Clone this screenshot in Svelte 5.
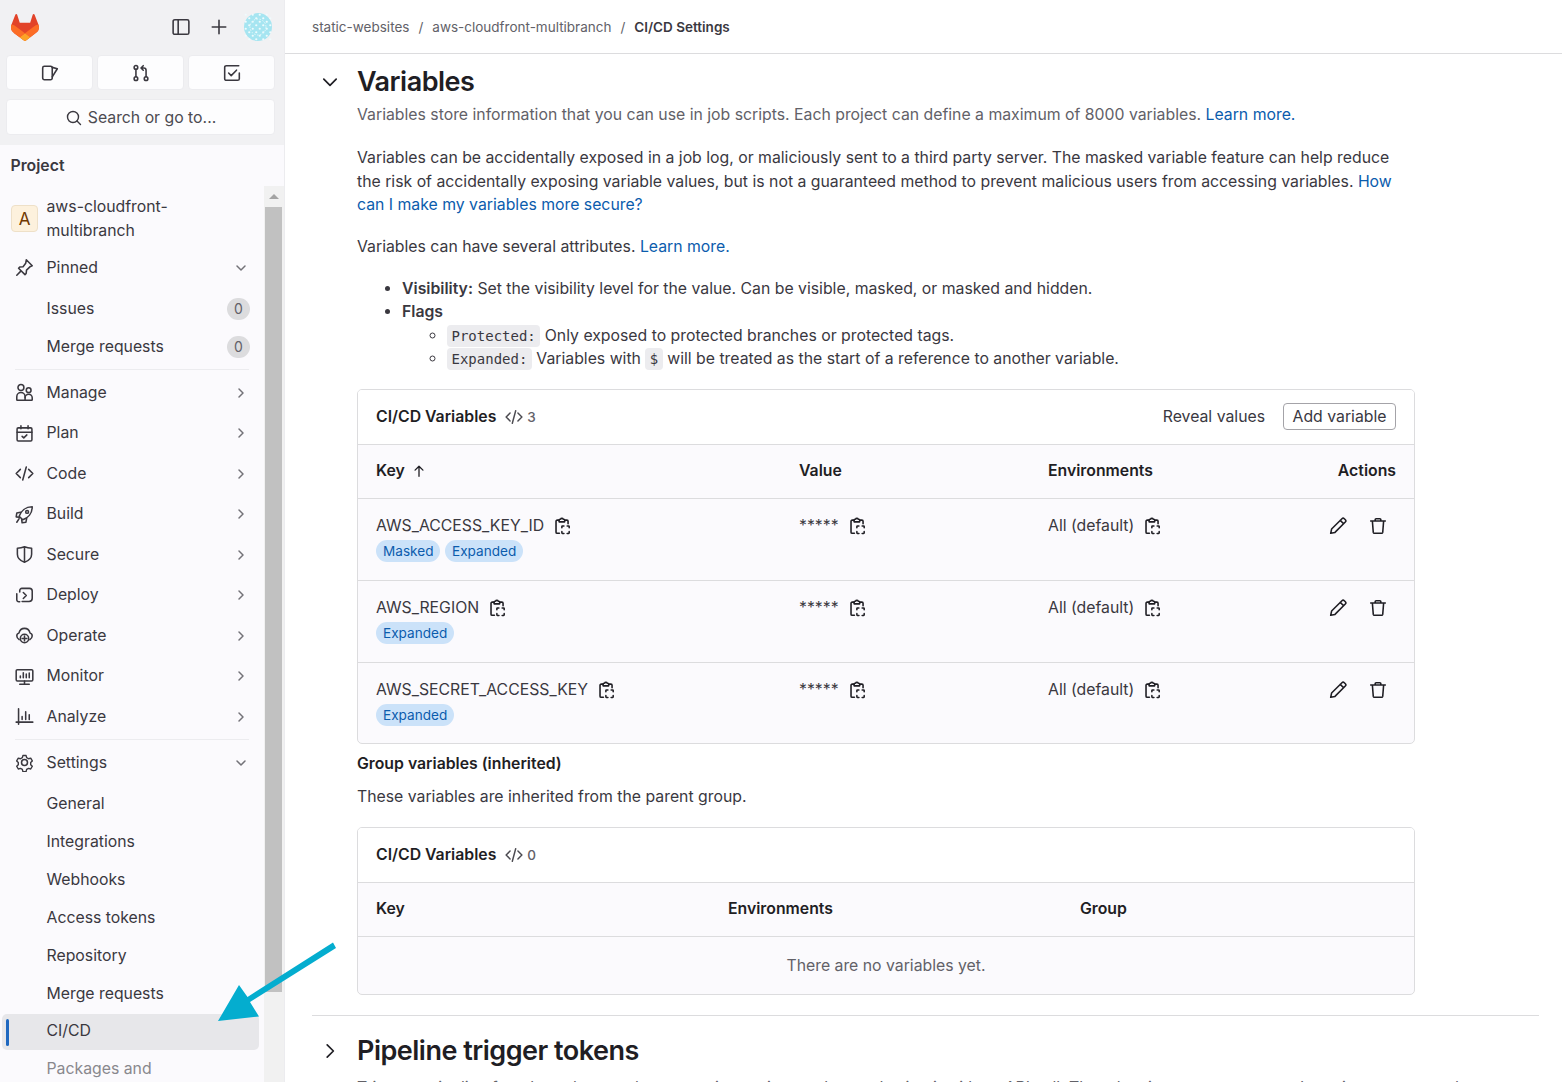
<script>
  const main = [
    { key: 'manage', label: 'Manage' }, { key: 'plan', label: 'Plan' }, { key: 'code', label: 'Code' },
    { key: 'build', label: 'Build' }, { key: 'secure', label: 'Secure' }, { key: 'deploy', label: 'Deploy' },
    { key: 'operate', label: 'Operate' }, { key: 'monitor', label: 'Monitor' }, { key: 'analyze', label: 'Analyze' }
  ];
  const subs = ['General', 'Integrations', 'Webhooks', 'Access tokens', 'Repository', 'Merge requests'];
  const vars = [
    { name: 'AWS_ACCESS_KEY_ID', tags: ['Masked', 'Expanded'] },
    { name: 'AWS_REGION', tags: ['Expanded'] },
    { name: 'AWS_SECRET_ACCESS_KEY', tags: ['Expanded'] }
  ];
  const dots = [];
  for (let r = 0; r < 8; r++) for (let c = 0; c < 8; c++) {
    const x = 1.75 + c * 3.5, y = 1.75 + r * 3.5;
    if ((r + c) % 2 === 0) dots.push({ x, y });
  }
</script>

{#snippet icon(k)}
  <svg class="ic" viewBox="0 0 16 16" fill="none" stroke="currentColor" stroke-width="1.300" stroke-linecap="round" stroke-linejoin="round">
    {#if k === 'manage'}
      <circle cx="5" cy="3.800" r="2.500" /><path d="M1.500 11.500a3.500 3.500 0 0 1 7 0V14a.5.5 0 0 1-.5.5H2a.5.5 0 0 1-.5-.5Z" /><circle cx="11.500" cy="6" r="2" /><path d="M8.500 14.500h5.500a.5.5 0 0 0 .5-.5v-1.500a3 3 0 0 0-3-3 3 3 0 0 0-3 3" />
    {:else if k === 'plan'}
      <rect x="1.750" y="3.250" width="12.500" height="11" rx="1" /><path d="M1.750 7h12.500M5 1.500v2.500M11 1.500v2.500M6 10.400l1.400 1.300L10 9.200" />
    {:else if k === 'code'}
      <path d="M4.500 4.500 1 8l3.500 3.500M11.500 4.500 15 8l-3.500 3.500M9.500 2.500l-3 11" />
    {:else if k === 'build'}
      <path d="M5 11 3.500 9.500C5 5 9 1.500 14.500 1.500 14.500 7 11 11 6.500 12.500Z" /><circle cx="10.200" cy="5.800" r="1.200" /><path d="M4.600 6.200 1.500 6.800 1 10l2.600.4M9.800 11.400l-.6 3.100L6 15l-.4-2.600M3.500 11.500 1.500 14.500" />
    {:else if k === 'secure'}
      <path d="M8 1.500c2 .9 4 1.200 6 1.200v5c0 3.300-2.500 5.500-6 6.800-3.500-1.300-6-3.500-6-6.800v-5c2 0 4-.3 6-1.200ZM8 1.500v13" />
    {:else if k === 'deploy'}
      <path d="M4 5V3.800A1.800 1.800 0 0 1 5.800 2h6.400A2.300 2.300 0 0 1 14.500 4.300v6A2.700 2.700 0 0 1 11.800 13H6M1.500 6.500v5A1.700 1.700 0 0 0 3.200 13.200H4M7 5.500 9.500 8 7 10.500" />
    {:else if k === 'operate'}
      <path d="M3.500 11.500C1 10 .8 6.700 3.300 6 4 3.300 6 2 8 2s4 1.300 4.700 4c2.500.7 2.300 4 -.2 5.500" /><circle cx="8" cy="10.500" r="3.500" /><path d="M8 8.500v4M6 10.500h4" />
    {:else if k === 'monitor'}
      <rect x="1" y="2.250" width="14" height="9.500" rx="1" /><path d="M4 14.500h8M8 11.750v2.750M4.500 9V7.500M7 9V4.800M9.500 9V6M12 9V5" />
    {:else if k === 'analyze'}
      <path d="M3 1.500v13M1 12.750h14M6 10.500V8M9 10.500V4M12 10.500V6.500" />
    {:else if k === 'settings'}
      <path d="M6.500 1.500h3l.5 2 1.800 1 2-.6 1.500 2.600-1.500 1.500v2l1.500 1.500-1.500 2.600-2-.6-1.800 1-.5 2h-3l-.5-2-1.800-1-2 .6L.7 11.500l1.500-1.500V8L.7 6.500l1.500-2.600 2 .6 1.800-1Z" transform="translate(.8 .8) scale(.9)" /><circle cx="8" cy="8" r="2.500" />
    {:else if k === 'pin'}
      <path d="M9.500 1.500l5 5-1.500.6-3.300 3.100-.3 2.800-1 1-5.400-5.400 1-1 2.800-.3L9 4.500ZM4.500 11.500l-3 3" />
    {/if}
  </svg>
{/snippet}

{#snippet chevR()}
  <svg class="chev" viewBox="0 0 16 16" fill="none" stroke="currentColor" stroke-width="1.500" stroke-linecap="round" stroke-linejoin="round"><path d="M6 4l4 4-4 4" /></svg>
{/snippet}
{#snippet chevD()}
  <svg class="chev" viewBox="0 0 16 16" fill="none" stroke="currentColor" stroke-width="1.500" stroke-linecap="round" stroke-linejoin="round"><path d="M4 6l4 4 4-4" /></svg>
{/snippet}
{#snippet clip()}
  <svg class="clip" viewBox="0 0 16 16" fill="none" stroke="currentColor" stroke-width="1.400" stroke-linecap="round" stroke-linejoin="round">
    <path d="M4.500 2.800H2.800a1 1 0 0 0-1 1v9.700a1 1 0 0 0 1 1h2" />
    <path d="M10 2.800h1.500a1 1 0 0 1 1 1V6" />
    <path d="M4.500 4.300V2.800a.8.8 0 0 1 .8-.8h.5a1.300 1.300 0 0 1 2.400 0h.5a.8.8 0 0 1 .8.800v1.500Z" />
    <path d="M7 9.600V8.500a.5.5 0 0 1 .5-.5h1.300M11.700 8H13a.5.5 0 0 1 .5.500v1.100M13.500 13v1.100a.5.5 0 0 1-.5.500h-1.300M8.800 14.600H7.500a.5.5 0 0 1-.5-.5V13" />
  </svg>
{/snippet}
{#snippet codeTag()}
  <svg class="codeTag" viewBox="0 0 16 16" fill="none" stroke="currentColor" stroke-width="1.300" stroke-linecap="round" stroke-linejoin="round"><path d="M4.500 4.500 1 8l3.500 3.500M11.500 4.500 15 8l-3.500 3.500M9.500 2.500l-3 11" /></svg>
{/snippet}

<div class="page">
  <aside class="sidebar">
    <div class="top">
      <div class="toprow">
        <svg class="logo" viewBox="0 0 25 24">
          <path d="m24.507 9.5-.034-.09L21.082.562a.896.896 0 0 0-1.694.091l-2.29 7.01H7.825L5.535.653a.898.898 0 0 0-1.694-.09L.451 9.411.416 9.5a6.297 6.297 0 0 0 2.09 7.278l.012.01.03.022 5.16 3.867 2.56 1.935 1.554 1.176a1.051 1.051 0 0 0 1.268 0l1.555-1.176 2.56-1.935 5.197-3.89.014-.01A6.297 6.297 0 0 0 24.507 9.5Z" fill="#E24329" />
          <path d="m24.507 9.5-.034-.09a11.44 11.44 0 0 0-4.56 2.051l-7.447 5.632 4.742 3.584 5.197-3.89.014-.01A6.297 6.297 0 0 0 24.507 9.5Z" fill="#FC6D26" />
          <path d="m7.707 20.677 2.56 1.935 1.555 1.176a1.051 1.051 0 0 0 1.268 0l1.555-1.176 2.56-1.935-4.743-3.584-4.755 3.584Z" fill="#FCA326" />
          <path d="M5.01 11.461a11.43 11.43 0 0 0-4.56-2.05L.416 9.5a6.297 6.297 0 0 0 2.09 7.278l.012.01.03.022 5.16 3.867 4.745-3.584-7.444-5.632Z" fill="#FC6D26" />
        </svg>
        <svg class="topic panel" viewBox="0 0 16 16" fill="none" stroke="currentColor" stroke-width="1.400"><rect x="1" y="1.500" width="14" height="13" rx="1.500" /><path d="M5.500 1.500v13" /></svg>
        <svg class="topic plus" viewBox="0 0 16 16" fill="none" stroke="currentColor" stroke-width="1.400" stroke-linecap="round"><path d="M8 2v12M2 8h12" /></svg>
        <svg class="avatar" viewBox="0 0 28 28">
          <circle cx="14" cy="14" r="14" fill="#a6e5f1" />
          {#each dots as d}<circle cx={d.x} cy={d.y} r="1.100" fill="#effbfd" />{/each}
          <circle cx="14" cy="14" r="8" fill="none" stroke="#e4f8fb" stroke-width="1" stroke-dasharray="1.500 1.500" />
        </svg>
      </div>
      <div class="btns">
        <div class="tb">
          <svg class="topic" viewBox="0 0 16 16" fill="none" stroke="currentColor" stroke-width="1.400" stroke-linejoin="round" stroke-linecap="round"><path d="M1.500 3.500A1.500 1.500 0 0 1 3 2h5.500A1.500 1.500 0 0 1 10 3.500v9A1.500 1.500 0 0 1 8.500 14H3a1.500 1.500 0 0 1-1.500-1.500Z" /><path d="M10 3l4.500 1.200L10 11.500" /></svg>
        </div>
        <div class="tb">
          <svg class="topic" viewBox="0 0 16 16" fill="none" stroke="currentColor" stroke-width="1.400" stroke-linecap="round" stroke-linejoin="round"><circle cx="3.500" cy="3" r="1.600" /><circle cx="3.500" cy="13" r="1.600" /><circle cx="12.500" cy="13" r="1.600" /><path d="M3.500 4.600v6.800M12.500 11.400V5.500A2 2 0 0 0 10.500 3.500H8.500M10 1.500 8 3.500l2 2" /></svg>
        </div>
        <div class="tb">
          <svg class="topic" viewBox="0 0 16 16" fill="none" stroke="currentColor" stroke-width="1.400" stroke-linecap="round" stroke-linejoin="round"><path d="M14.500 8v5A1.500 1.500 0 0 1 13 14.500H3A1.500 1.500 0 0 1 1.500 13V3A1.500 1.500 0 0 1 3 1.500h11M5 8l2.300 2.300L12 5.500" /></svg>
        </div>
      </div>
      <div class="search">
        <svg class="searchic" viewBox="0 0 16 16" fill="none" stroke="currentColor" stroke-width="1.400" stroke-linecap="round"><circle cx="7" cy="7" r="5.500" /><path d="M11 11l3.500 3.500" /></svg>
        Search or go to...
      </div>
    </div>
    <div class="context">Project</div>
    <div class="navwrap">
      <nav class="nav">
        <div class="project"><span class="pa">A</span><span class="pn">aws-cloudfront-<br />multibranch</span></div>
        <div class="row pinned">{@render icon('pin')}<span class="grow">Pinned</span>{@render chevD()}</div>
        <div class="sub gap"><span class="grow">Issues</span><span class="count">0</span></div>
        <div class="sub"><span class="grow">Merge requests</span><span class="count">0</span></div>
        <hr class="h1" />
        {#each main as m}
          <div class="row">{@render icon(m.key)}<span class="grow">{m.label}</span>{@render chevR()}</div>
        {/each}
        <hr class="h2" />
        <div class="row">{@render icon('settings')}<span class="grow">Settings</span>{@render chevD()}</div>
        {#each subs as s, i}
          <div class="sub" class:gap={i === 0}><span class="grow">{s}</span></div>
        {/each}
        <div class="sub active"><span class="grow">CI/CD</span></div>
        <div class="sub faded"><span class="grow">Packages and</span></div>
      </nav>
      <div class="scroll">
        <div class="up"></div>
        <div class="thumb"></div>
      </div>
    </div>
  </aside>

  <main class="content">
    <header class="crumbs">
      <span>static-websites</span><i>/</i><span>aws-cloudfront-multibranch</span><i>/</i><b>CI/CD Settings</b>
    </header>
    <div class="body">
      <div class="sec-head">
        <svg class="secchev" viewBox="0 0 16 16" fill="none" stroke="currentColor" stroke-width="1.500" stroke-linecap="round" stroke-linejoin="round"><path d="M2.500 5.500 8 11l5.500-5.500" /></svg>
        <h2>Variables</h2>
      </div>
      <div class="col">
        <p class="lead">Variables store information that you can use in job scripts. Each project can define a maximum of 8000 variables. <a href="#a">Learn more.</a></p>
        <p class="p1">Variables can be accidentally exposed in a job log, or maliciously sent to a third party server. The masked variable feature can help reduce the risk of accidentally exposing variable values, but is not a guaranteed method to prevent malicious users from accessing variables. <a href="#a">How can I make my variables more secure?</a></p>
        <p class="p2">Variables can have several attributes. <a href="#a">Learn more.</a></p>
        <ul>
          <li><b>Visibility:</b> Set the visibility level for the value. Can be visible, masked, or masked and hidden.</li>
          <li><b>Flags</b>
            <ul>
              <li><code>Protected:</code> Only exposed to protected branches or protected tags.</li>
              <li><code>Expanded:</code> Variables with <code>$</code> will be treated as the start of a reference to another variable.</li>
            </ul>
          </li>
        </ul>

        <section class="card">
          <div class="card-head">
            <b>CI/CD Variables</b>{@render codeTag()}<span class="num">3</span>
            <span class="grow"></span>
            <span class="reveal">Reveal values</span><span class="add">Add variable</span>
          </div>
          <div class="grid four th">
            <b class="keyhead">Key <svg class="sort" viewBox="0 0 16 16" fill="none" stroke="currentColor" stroke-width="1.500" stroke-linecap="round" stroke-linejoin="round"><path d="M8 14V2.500M3.500 7 8 2.500 12.500 7" /></svg></b>
            <b>Value</b><b>Environments</b><b class="right">Actions</b>
          </div>
          {#each vars as v}
            <div class="grid four tr">
              <div>
                <div class="cell">{v.name}{@render clip()}</div>
                <div class="tags">{#each v.tags as t}<span class="tag">{t}</span>{/each}</div>
              </div>
              <div class="cell stars">*****{@render clip()}</div>
              <div class="cell">All (default){@render clip()}</div>
              <div class="acts">
                <svg class="act" viewBox="0 0 16 16" fill="none" stroke="currentColor" stroke-width="1.400" stroke-linecap="round" stroke-linejoin="round"><path d="M1.500 14.500l.8-3.800L11.500 1.500a1.500 1.500 0 0 1 2.100 0l.9.9a1.500 1.500 0 0 1 0 2.100L5.300 13.700ZM10 3l3 3" /></svg>
                <svg class="act" viewBox="0 0 16 16" fill="none" stroke="currentColor" stroke-width="1.400" stroke-linecap="round" stroke-linejoin="round"><path d="M1.500 3.500h13M5.500 3.500V2.300a.8.8 0 0 1 .8-.8h3.400a.8.8 0 0 1 .8.8v1.200M3 3.500l.8 10.200a1 1 0 0 0 1 .8h6.400a1 1 0 0 0 1-.8L13 3.500" /></svg>
              </div>
            </div>
          {/each}
        </section>

        <h3 class="group">Group variables (inherited)</h3>
        <p class="groupp">These variables are inherited from the parent group.</p>

        <section class="card card2">
          <div class="card-head">
            <b>CI/CD Variables</b>{@render codeTag()}<span class="num">0</span>
          </div>
          <div class="grid three th"><b>Key</b><b>Environments</b><b>Group</b></div>
          <div class="empty">There are no variables yet.</div>
        </section>
      </div>
      <hr class="secline" />
      <div class="sec-head two">
        <svg class="secchev" viewBox="0 0 16 16" fill="none" stroke="currentColor" stroke-width="1.500" stroke-linecap="round" stroke-linejoin="round"><path d="M5.500 2.500 11 8l-5.500 5.500" /></svg>
        <h2>Pipeline trigger tokens</h2>
      </div>
      <p class="cut">Trigger a pipeline for a branch or tag by generating a trigger token and using it with an API call. The token impersonates a user's project access and</p>
    </div>
  </main>

  <svg class="arrow" viewBox="0 0 1562 1082" aria-hidden="true">
    <path d="M333 942.500 336 948 250 1002 259 1016.500 218 1021 239 985 247.500 997Z" fill="#04adcf" />
  </svg>
</div>

<style>
  :global(body) { margin: 0; background: #fff; }
  .page {
    position: relative; display: flex; width: 1562px; height: 1082px; overflow: hidden;
    font-family: Inter, "Noto Sans", sans-serif; font-size: 15.800px; color: #3a383f; line-height: 24px;
  }
  .sidebar { width: 284px; flex: none; background: #fbfafd; border-right: 1px solid #ececef; display: flex; flex-direction: column; }
  .top { background: #f1f1f3; height: 145px; padding: 0 9px 0 6px; box-sizing: border-box; flex: none; }
  .toprow { display: flex; align-items: center; height: 54px; margin-bottom: 1px; padding-left: 5px; }
  .logo { width: 28px; height: 27px; margin-right: auto; }
  .topic { width: 18px; height: 18px; color: #3a383f; display: block; }
  .panel { margin-right: 20px; }
  .plus { margin-right: 16px; }
  .avatar { width: 28px; height: 28px; margin-right: 3px; }
  .btns { display: flex; gap: 4px; }
  .tb { flex: 1; height: 35px; background: #fdfdfe; border: 1px solid #ececef; border-radius: 4px; display: flex; align-items: center; justify-content: center; box-sizing: border-box; }
  .search { margin-top: 9px; height: 36px; background: #fdfdfe; border: 1px solid #ececef; border-radius: 4px; box-sizing: border-box; display: flex; align-items: center; justify-content: center; gap: 6px; color: #4c4b51; padding: 1px 0 0 1px; }
  .searchic { width: 16px; height: 16px; color: #3a383f; }
  .context { height: 41px; flex: none; font-weight: 600; padding-left: 10.500px; line-height: 41px; color: #3a383f; }
  .navwrap { display: flex; flex: 1; min-height: 0; }
  .nav { width: 264px; flex: none; box-sizing: border-box; padding: 7px 5px 0 3px; }
  .project { display: flex; align-items: center; height: 51px; padding-left: 8px; gap: 8.500px; margin-bottom: 3.250px; }
  .pa { width: 27px; height: 27px; box-sizing: border-box; background: #fdf1dd; border: 1px solid #eee0c8; border-radius: 4px; color: #703800; display: flex; align-items: center; justify-content: center; font-size: 17px; }
  .row, .sub { display: flex; align-items: center; position: relative; box-sizing: border-box; }
  .row { height: 40.500px; padding: 0 9px 0 12px; }
  .sub { height: 38.100px; padding: 0 9px 0 43.500px; }
  .sub.gap { margin-top: 1.800px; }
  .ic { width: 19px; height: 19px; flex: none; margin-right: 12.500px; color: #3a383f; }
  .grow { flex: 1; }
  .chev { width: 16px; height: 16px; color: #737278; margin-left: auto; margin-right: 1px; }
  .count { width: 23px; height: 22px; border-radius: 11px; background: #dcdcde; color: #626168; font-size: 14px; display: flex; align-items: center; justify-content: center; }
  .nav hr { border: 0; border-top: 1px solid #ececef; margin: 0 10px 0 12px; }
  .nav hr.h1 { margin-top: 3.700px; margin-bottom: 2px; }
  .nav hr.h2 { margin-top: 2.500px; margin-bottom: 2px; }
  .active { background: #e7e7ea; border-radius: 5px; height: 36px; margin: 1px 0 -0.500px -1px; padding: 0 9px 2px 44.500px; }
  .active::before { content: ''; position: absolute; left: 4px; top: 5px; width: 3px; height: 27px; border-radius: 2px; background: #1f68c0; }
  .faded { color: #89888d; }
  .scroll { width: 20px; flex: none; background: #f1f1f1; box-sizing: border-box; padding: 0 2px 0 1px; }
  .up { height: 21px; position: relative; }
  .up::after { content: ''; position: absolute; left: 4px; top: 8px; border: 5px solid transparent; border-top: 0; border-bottom-color: #a3a3a3; }
  .thumb { height: 785px; background: #c1c1c1; }

  .content { flex: 1; min-width: 0; display: flex; flex-direction: column; }
  .crumbs { height: 54px; box-sizing: border-box; flex: none; border-bottom: 1px solid #dcdcde; display: flex; align-items: center; padding-left: 27px; font-size: 13.500px; color: #626168; }
  .crumbs i { font-style: normal; margin: 0 9px; }
  .crumbs b { font-weight: 600; color: #3a383f; }
  .body { padding: 0 23px 0 27px; }
  .sec-head { display: flex; align-items: center; height: 54px; padding-top: 1px; }
  .secchev { width: 18px; height: 18px; margin-left: 9px; margin-right: 18px; color: #1f1e24; flex: none; }
  h2 { margin: 0; font-size: 27px; line-height: 36px; font-weight: 600; color: #1f1e24; letter-spacing: -0.500px; }
  .col { margin-left: 45px; width: 1058px; }
  p { margin: 0; }
  a { color: #0b5cad; text-decoration: none; }
  .lead { color: #626168; height: 25px; line-height: 24px; margin-top: -6px; }
  .p1 { margin-top: 18px; line-height: 23.500px; max-width: 1040px; }
  .p2 { margin-top: 18px; }
  ul { margin: 18.500px 0 0; padding: 0 0 0 45px; line-height: 23.400px; list-style: disc; }
  ul ul { margin: 0; padding-left: 45px; list-style: circle; }
  li b { font-weight: 600; }
  code { font-family: "DejaVu Sans Mono", monospace; font-size: 14px; line-height: 1; background: #ececef; border-radius: 4px; padding: 3px 4.500px; }
  .card { border: 1px solid #dcdcde; border-radius: 5px; margin-top: 18px; background: #fbfafd; overflow: hidden; }
  .card-head { height: 55px; background: #fff; border-bottom: 1px solid #dcdcde; box-sizing: border-box; display: flex; align-items: center; padding: 0 18px; }
  .card-head b, .th b { font-weight: 600; color: #1f1e24; }
  .codeTag { width: 18px; height: 18px; margin-left: 9px; color: #4c4b51; }
  .num { font-size: 13.500px; color: #626168; margin-left: 4px; font-weight: 500; }
  .reveal { margin-right: 18px; }
  .add { height: 27px; box-sizing: border-box; border: 1px solid #a4a3a8; border-radius: 4px; padding: 0 8.500px; display: flex; align-items: center; }
  .grid { display: grid; padding: 0 18px; }
  .four { grid-template-columns: 423px 249px 1fr 120px; }
  .three { grid-template-columns: 352px 352px 1fr; }
  .th { height: 54px; align-items: center; border-bottom: 1px solid #dcdcde; box-sizing: border-box; }
  .right { text-align: right; }
  .keyhead { display: flex; align-items: center; gap: 7px; }
  .sort { width: 14px; height: 14px; }
  .tr { height: 82px; box-sizing: border-box; border-bottom: 1px solid #dcdcde; padding-top: 15px; }
  .tr:last-child { border-bottom: 0; height: 80px; }
  .cell { display: flex; align-items: center; height: 24px; }
  .clip { width: 18px; height: 18px; margin-left: 10px; color: #1f1e24; }
  .tags { display: flex; gap: 5px; margin-top: 2px; }
  .tag { height: 22px; border-radius: 11px; background: #cbe2f9; color: #0b5cad; font-size: 13.600px; padding: 0 6.500px 0 7px; display: flex; align-items: center; }
  .acts { display: flex; justify-content: flex-end; gap: 22px; padding-right: 9px; padding-top: 3px; align-items: flex-start; }
  .act { width: 18px; height: 18px; color: #1f1e24; }
  .group { margin: 8px 0 0; font-size: 15.800px; line-height: 24px; font-weight: 600; color: #1f1e24; }
  .groupp { margin-top: 9px; }
  .card2 { margin-top: 18px; }
  .empty { height: 57px; box-sizing: border-box; padding-top: 2px; display: flex; align-items: center; justify-content: center; color: #626168; }
  .secline { border: 0; border-top: 1px solid #dcdcde; margin: 20px 0 0; }
  .two { margin-top: 7px; }
  .cut { margin-left: 45px; margin-top: -2px; color: #626168; white-space: nowrap; }
  .arrow { position: absolute; inset: 0; width: 1562px; height: 1082px; pointer-events: none; }
</style>
